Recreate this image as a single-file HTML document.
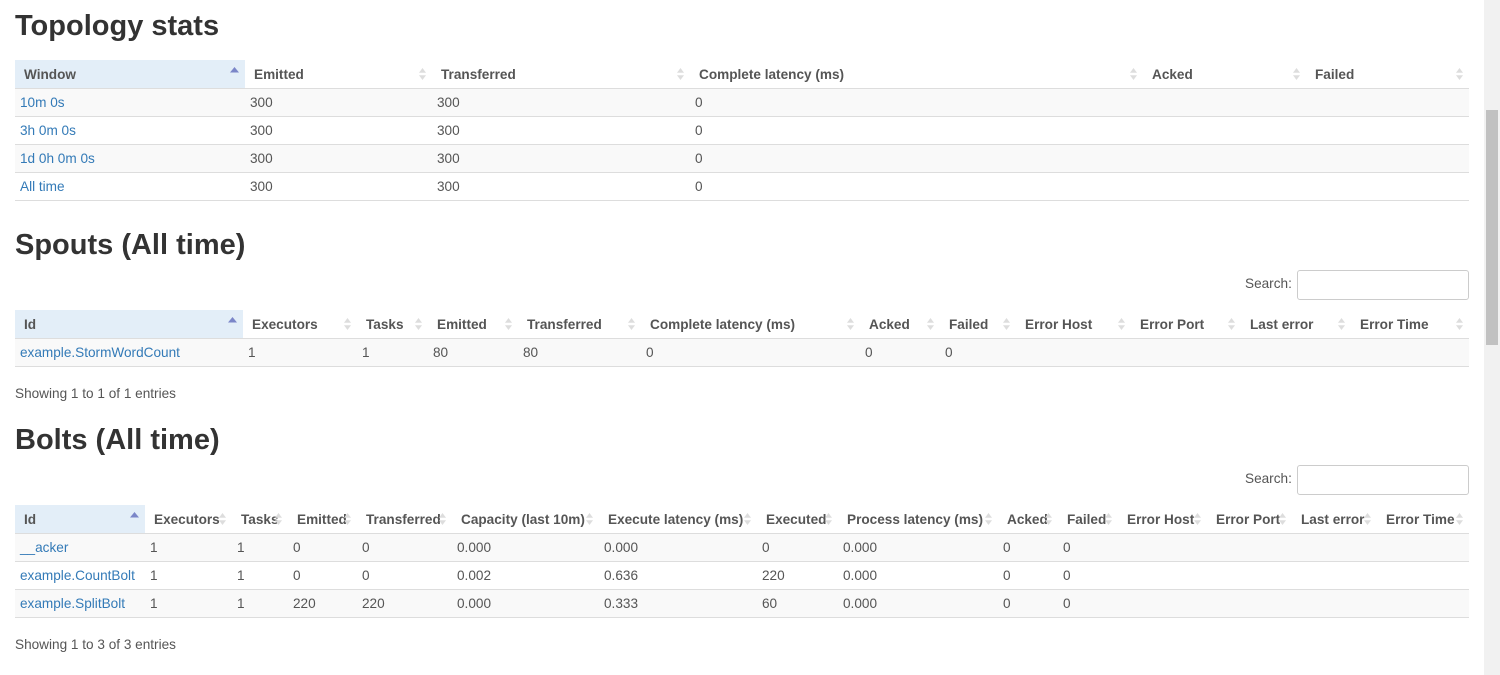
<!DOCTYPE html>
<html><head><meta charset="utf-8"><style>
body{margin:0;width:1500px;height:675px;overflow:hidden;background:#fff;font-family:"Liberation Sans",sans-serif;font-size:13.6px;color:#555;position:relative}
h2{position:absolute;left:15px;margin:0;font-size:29px;font-weight:bold;color:#333;line-height:32px}
table{position:absolute;left:15px;width:1454px;border-collapse:collapse;table-layout:fixed}
th{height:28px;text-align:left;font-weight:bold;color:#555;padding:0 0 0 9px;border-bottom:1px solid #ddd;position:relative;white-space:nowrap;overflow:hidden}
th.s{background:#e3eef8}
th:after{content:"";position:absolute;right:6px;top:8px;width:7px;height:12px;background:linear-gradient(#ddd,#ddd);clip-path:polygon(50% 0,100% 40%,0 40%,0 60%,100% 60%,50% 100%,0 60%,0 40%)}
th.s:after{background:#7b86c8;clip-path:polygon(50% 0,100% 55%,0 55%);top:7px;width:9px;height:10px}
td{height:27px;padding:0 0 0 5px;border-bottom:1px solid #ddd;white-space:nowrap;overflow:hidden}
tr.o td{background:#f9f9f9}
a{color:#337ab7;text-decoration:none}
.show{position:absolute;left:15px;color:#555}
.search{position:absolute;left:1245px;color:#555}
.inp{position:absolute;left:1297px;width:170px;height:28px;border:1px solid #ccc;border-radius:3px}
.sb{position:absolute;left:1484px;top:0;width:16px;height:675px;background:#f1f1f1}
.th{position:absolute;left:1486px;top:110px;width:12px;height:235px;background:#c1c1c1}
</style></head><body>
<h2 style="top:10px">Topology stats</h2>
<table style="top:60px">
<colgroup><col style="width:230px"><col style="width:187px"><col style="width:258px"><col style="width:453px"><col style="width:163px"><col style="width:163px"></colgroup>
<tr><th class="s">Window</th><th>Emitted</th><th>Transferred</th><th>Complete latency (ms)</th><th>Acked</th><th>Failed</th></tr>
<tr class="o"><td><a>10m 0s</a></td><td>300</td><td>300</td><td>0</td><td></td><td></td></tr>
<tr><td><a>3h 0m 0s</a></td><td>300</td><td>300</td><td>0</td><td></td><td></td></tr>
<tr class="o"><td><a>1d 0h 0m 0s</a></td><td>300</td><td>300</td><td>0</td><td></td><td></td></tr>
<tr><td><a>All time</a></td><td>300</td><td>300</td><td>0</td><td></td><td></td></tr>
</table>
<h2 style="top:229px">Spouts (All time)</h2>
<div class="search" style="top:276px">Search:</div><div class="inp" style="top:270px"></div>
<table style="top:310px">
<colgroup><col style="width:228px"><col style="width:114px"><col style="width:71px"><col style="width:90px"><col style="width:123px"><col style="width:219px"><col style="width:80px"><col style="width:76px"><col style="width:115px"><col style="width:110px"><col style="width:110px"><col style="width:118px"></colgroup>
<tr><th class="s">Id</th><th>Executors</th><th>Tasks</th><th>Emitted</th><th>Transferred</th><th>Complete latency (ms)</th><th>Acked</th><th>Failed</th><th>Error Host</th><th>Error Port</th><th>Last error</th><th>Error Time</th></tr>
<tr class="o"><td><a>example.StormWordCount</a></td><td>1</td><td>1</td><td>80</td><td>80</td><td>0</td><td>0</td><td>0</td><td></td><td></td><td></td><td></td></tr>
</table>
<div class="show" style="top:386px">Showing 1 to 1 of 1 entries</div>
<h2 style="top:424px">Bolts (All time)</h2>
<div class="search" style="top:471px">Search:</div><div class="inp" style="top:465px"></div>
<table style="top:505px">
<colgroup><col style="width:130px"><col style="width:87px"><col style="width:56px"><col style="width:69px"><col style="width:95px"><col style="width:147px"><col style="width:158px"><col style="width:81px"><col style="width:160px"><col style="width:60px"><col style="width:60px"><col style="width:89px"><col style="width:85px"><col style="width:85px"><col style="width:92px"></colgroup>
<tr><th class="s">Id</th><th>Executors</th><th>Tasks</th><th>Emitted</th><th>Transferred</th><th>Capacity (last 10m)</th><th>Execute latency (ms)</th><th>Executed</th><th>Process latency (ms)</th><th>Acked</th><th>Failed</th><th>Error Host</th><th>Error Port</th><th>Last error</th><th>Error Time</th></tr>
<tr class="o"><td><a>__acker</a></td><td>1</td><td>1</td><td>0</td><td>0</td><td>0.000</td><td>0.000</td><td>0</td><td>0.000</td><td>0</td><td>0</td><td></td><td></td><td></td><td></td></tr>
<tr><td><a>example.CountBolt</a></td><td>1</td><td>1</td><td>0</td><td>0</td><td>0.002</td><td>0.636</td><td>220</td><td>0.000</td><td>0</td><td>0</td><td></td><td></td><td></td><td></td></tr>
<tr class="o"><td><a>example.SplitBolt</a></td><td>1</td><td>1</td><td>220</td><td>220</td><td>0.000</td><td>0.333</td><td>60</td><td>0.000</td><td>0</td><td>0</td><td></td><td></td><td></td><td></td></tr>
</table>
<div class="show" style="top:386px;display:none"></div>
<div class="show" style="top:637px">Showing 1 to 3 of 3 entries</div>
<div class="sb"></div><div class="th"></div>
</body></html>
